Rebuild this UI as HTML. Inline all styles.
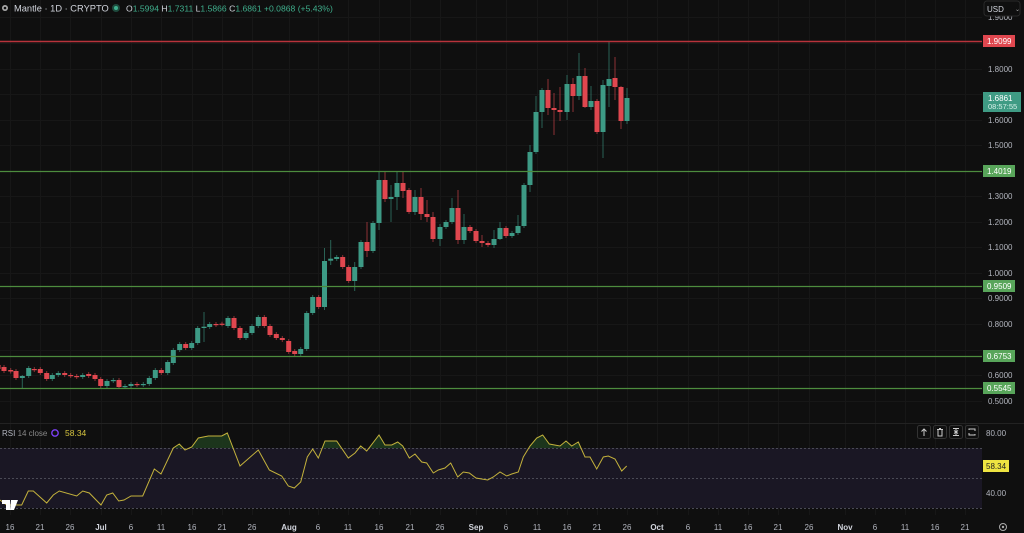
<!DOCTYPE html>
<html><head><meta charset="utf-8"><style>
html,body{margin:0;padding:0;background:#0f0f0f;width:1024px;height:533px;overflow:hidden;font-family:"Liberation Sans",sans-serif}
svg{position:absolute;left:0;top:0}
text{font-family:"Liberation Sans",sans-serif}
</style></head><body>
<svg id="s" width="1024" height="533" viewBox="0 0 1024 533">
<rect width="1024" height="533" fill="#0f0f0f"/>
<g id="grid" stroke="#171717" stroke-width="1"></g>
<rect x="0" y="448" width="982" height="60" fill="#1a1724"/>
<g stroke="#4a4a55" stroke-dasharray="2,2" stroke-width="1">
<line x1="0" y1="448.5" x2="982" y2="448.5"/><line x1="0" y1="478.5" x2="982" y2="478.5"/><line x1="0" y1="508.5" x2="982" y2="508.5"/>
</g>
<line x1="0" y1="423.5" x2="1024" y2="423.5" stroke="#222" />
<g id="candles"></g>
<line x1="0" y1="41.5" x2="982" y2="41.5" stroke="#b8333b" stroke-width="1.5"/>
<line x1="0" y1="171.5" x2="982" y2="171.5" stroke="#4d8c3e" stroke-width="1.3"/>
<line x1="0" y1="286.5" x2="982" y2="286.5" stroke="#4d8c3e" stroke-width="1.3"/>
<line x1="0" y1="356.5" x2="982" y2="356.5" stroke="#4d8c3e" stroke-width="1.3"/>
<line x1="0" y1="388.5" x2="982" y2="388.5" stroke="#4d8c3e" stroke-width="1.3"/>
<g fill="#b2b5be" font-size="8">
<text x="988" y="20">1.9000</text>
<text x="988" y="72">1.8000</text>
<text x="988" y="123">1.6000</text>
<text x="988" y="148">1.5000</text>
<text x="988" y="199">1.3000</text>
<text x="988" y="225">1.2000</text>
<text x="988" y="250">1.1000</text>
<text x="988" y="276">1.0000</text>
<text x="988" y="301">0.9000</text>
<text x="988" y="327">0.8000</text>
<text x="988" y="378">0.6000</text>
<text x="988" y="404">0.5000</text>
</g>
<rect x="984" y="1" width="36" height="15" rx="3" fill="#0f0f0f" stroke="#2a2a2a"/>
<text x="987" y="12" fill="#d1d4dc" font-size="8">USD</text>
<text x="1015" y="11" fill="#aaa" font-size="6">⌄</text>
<rect x="983" y="35" width="32" height="12" fill="#e0474f"/>
<text x="987" y="44" fill="#fff" font-size="8">1.9099</text>
<rect x="983" y="165" width="32" height="12" fill="#58a55a"/>
<text x="987" y="174" fill="#fff" font-size="8">1.4019</text>
<rect x="983" y="280" width="32" height="12" fill="#58a55a"/>
<text x="987" y="289" fill="#fff" font-size="8">0.9509</text>
<rect x="983" y="350" width="32" height="12" fill="#58a55a"/>
<text x="987" y="359" fill="#fff" font-size="8">0.6753</text>
<rect x="983" y="382" width="32" height="12" fill="#58a55a"/>
<text x="987" y="391" fill="#fff" font-size="8">0.5545</text>
<rect x="983" y="92" width="38" height="20" fill="#3f9b84"/>
<text x="988" y="101" fill="#fff" font-size="8">1.6861</text>
<text x="988" y="109" fill="#d6f0e8" font-size="7.5">08:57:55</text>
<circle cx="5" cy="8" r="3" fill="#aaa"/><circle cx="5" cy="8" r="1.3" fill="#0f0f0f"/>
<text x="14" y="11.5" fill="#d1d4dc" font-size="9.3">Mantle · 1D · CRYPTO</text>
<circle cx="116" cy="8" r="4" fill="#1e4a3d"/><circle cx="116" cy="8" r="2" fill="#3fb08e"/>
<text x="126" y="11.5" font-size="8.6" fill="#3fae8c"><tspan fill="#d1d4dc">O</tspan>1.5994 <tspan fill="#d1d4dc">H</tspan>1.7311 <tspan fill="#d1d4dc">L</tspan>1.5866 <tspan fill="#d1d4dc">C</tspan>1.6861 +0.0868 (+5.43%)</text>
<text x="2" y="436" fill="#b2b5be" font-size="8">RSI <tspan fill="#888">14 close</tspan></text>
<circle cx="55" cy="433" r="3.2" fill="none" stroke="#7b3ff2" stroke-width="1.4"/>
<text x="65" y="436" fill="#d7c53f" font-size="8.5">58.34</text>
<path id="ob" fill="#1e3a1e" opacity="0.9"/>
<polyline id="rsi" fill="none" stroke="#c4b23c" stroke-width="1"/>
<g fill="none" stroke="#333" stroke-width="1">
<rect x="917.5" y="425.5" width="13" height="13" rx="2"/><rect x="933.5" y="425.5" width="13" height="13" rx="2"/><rect x="949.5" y="425.5" width="13" height="13" rx="2"/><rect x="965.5" y="425.5" width="13" height="13" rx="2"/>
</g>
<g stroke="#ccc" stroke-width="1" fill="none">
<path d="M924 429v7M921.5 431.5l2.5-2.5 2.5 2.5"/>
<path d="M937 429.5h6M938 430v6h4v-6M939 428.5h2"/>
<path d="M953 428.5h6M953 435.5h6M956 429v6M954 430.5l2 1.5 2-1.5M954 433.5l2-1.5 2 1.5"/>
<path d="M969 430v-1h6v2M975 434v1h-6v-2"/>
</g>
<text x="986" y="436" fill="#b2b5be" font-size="8">80.00</text>
<text x="986" y="496" fill="#b2b5be" font-size="8">40.00</text>
<rect x="983" y="460" width="26" height="12" fill="#eee441"/>
<text x="986" y="469" fill="#222" font-size="8">58.34</text>
<path d="M2 500h8v10h-4v-6h-4z M11 500h7l-4 10h-4z" fill="#fff"/>
<g id="dates" font-size="8" fill="#b2b5be" text-anchor="middle"></g>
<circle cx="1003" cy="527" r="3.5" fill="none" stroke="#aaa" stroke-width="1"/><circle cx="1003" cy="527" r="1.2" fill="#aaa"/>
</svg>
<script>
var NS="http://www.w3.org/2000/svg";
function el(t,a,p){var e=document.createElementNS(NS,t);for(var k in a)e.setAttribute(k,a[k]);p.appendChild(e);return e;}
var grid=document.getElementById('grid');
var dx=[10,40,70,101,131,161,192,222,252,289,318,348,379,410,440,476,506,537,567,597,627,657,688,718,748,778,809,845,875,905,935,965];
var dl=["16","21","26","Jul","6","11","16","21","26","Aug","6","11","16","21","26","Sep","6","11","16","21","26","Oct","6","11","16","21","26","Nov","6","11","16","21"];
dx.forEach(function(x){el('line',{x1:x+.5,y1:0,x2:x+.5,y2:515},grid);});
[17,43,69,94,120,145,171,196,222,247,273,298,324,350,375,401].forEach(function(y){el('line',{x1:0,y1:y+.5,x2:982,y2:y+.5},grid);});
var dg=document.getElementById('dates');
dx.forEach(function(x,i){var t=el('text',{x:x,y:530},dg);t.textContent=dl[i];if(isNaN(+dl[i])){t.setAttribute('fill','#d1d4dc');t.setAttribute('font-weight','bold');}});
var G="#3d9a85",R="#e0474f";
var c=[[-2,365,369,'r'],[4,367,371,'r'],[10.7,370,371.5,'r'],[16,371,378,'r'],[22.3,376,378,'g',375,388],[28.7,368,376,'g'],[34.3,369,370,'r'],[40.3,369,373,'r'],[46.7,373,379,'r'],[52.3,375,379,'g'],[58.3,373,375,'g'],[64.7,373,375,'r'],[70.7,375,376,'r'],[76.7,376,377,'r'],[82.7,375,377,'g'],[88.7,374,376,'r'],[95,375,379,'r'],[100.7,379,386,'r'],[107,381,386,'g'],[113.3,380,381,'g'],[119,380,387,'r'],[125,386,387,'g'],[131,384,386,'g'],[137,384,385,'r'],[143.3,384,385,'g'],[149.3,378,384,'g'],[155.3,370,378,'g'],[161.3,370,373,'r'],[167.7,362,373,'g'],[173.3,350,363,'g'],[179.7,344,350,'g'],[185.7,344,348,'r'],[191.7,343,348,'g'],[197.7,328,343,'g'],[204,326.7,328,'g',312,342],[209.7,324,327,'g'],[216,324,325,'r'],[222,323.7,324.3,'r'],[228,318,326,'g'],[234,318,328,'r'],[240,328,338,'r'],[246,333,338,'g'],[252,326,333,'g'],[258.3,317,326,'g'],[264.3,317,326,'r'],[270,326,335,'r'],[276.3,334,338,'r'],[282.3,338,340,'r'],[288.7,341,352,'r'],[294.7,351,354,'r'],[300.7,349,354,'g'],[306.7,313,349,'g'],
[312.7,297,313,'g'],[318.7,297,307,'r'],[324.5,261,307,'g',248,310],[330.7,258.7,260.7,'g',240,265],[336.7,257,259,'g'],[342.7,257,267,'r'],[348.7,267,281,'r'],[354.7,267,281,'g',262,291],[361,242,267,'g'],[367,242,251,'r',222,257],[373,223,251,'g'],[379,180,223,'g',172,230],[385,180,199,'r',172,202],[391,197,199,'g',185,222],[397,183,197,'g',172,210],[403,183,191,'r',172,198],[409,190,212,'r'],[415,197,212,'g',190,215],[421,197,214,'r',188,220],[427,214,217,'r',200,222],[433,217,239,'r',212,242],[440,227,239,'g',224,246],[446,222,227,'g'],[452,208,222,'g',198,224],[458,208,240,'r',190,244],[464,227,240,'g',214,244],[470,227,231,'r'],[476,231,241,'r'],[482,241,243,'r',235,247],[488,243,245,'r'],[494,239,245,'g',230,248],[500,228,239,'g',222,240],[506,228,236,'r'],[512,233,236,'g'],[518,226,233,'g',215,235],[524,185,226,'g'],[530,152,185,'g',145,192],[536,112,152,'g',96,154],[542,90,112,'g',88,128],[548,90,108,'r',79,115],[554,108,110,'r',93,135],[560,110,112,'r',87,121],[567,84,112,'g',75,120],[573,84,96,'r',78,112],[579,76,96,'g',53,100],[585,76,107,'r',68,108],[591,101,107,'g',86,110],[597,101,132,'r'],[603,85,132,'g',80,158],[609,79,86,'g',42,107],[615,78,87,'r',57,100],[621,87,121,'r',86,129],[627,98,121,'g',88,124]];
var cg=document.getElementById('candles');
c.forEach(function(d){var col=d[3]=='g'?G:R;var x=d[0];var hi=d[4]!==undefined?d[4]:d[1]-2,lo=d[5]!==undefined?d[5]:d[2]+2;
el('line',{x1:x,y1:hi,x2:x,y2:lo,stroke:col,'stroke-width':1,opacity:0.6},cg);
el('rect',{x:x-2.5,y:d[1],width:5,height:Math.max(1.2,d[2]-d[1]),fill:col},cg);});
var r=[[0,500],[6.7,505],[21.7,505],[28.3,491],[33.3,491],[46.7,503],[53.3,495],[59.3,491],[76.7,496],[82.7,491],[89.3,493],[101,505],[106.7,495],[112.7,493],[118.7,501],[124,500],[131,496],[142.7,496],[154.3,469],[161,474],[173.3,448],[179.3,444],[185,450],[191.7,447],[198.3,438],[208.3,436],[221.7,436],[227.3,433],[240,466],[258.3,450],[269.3,470],[281.7,476],[288.3,486],[294.3,488],[300.7,482],[307.3,457],[312.7,449],[318.3,458],[325,441],[330,441],[336.7,441],[348.3,458],[355,453],[360.7,446],[366.7,451],[379,435],[385,445],[391.7,445],[397.7,442],[402.7,446],[409.3,458],[415,454],[421.7,462],[426.7,463],[433.3,473],[438.3,470],[445,468],[450.7,463],[457.7,477],[463.3,472],[469.3,473],[476,478],[481.7,479],[487.7,480],[493.3,477],[500,472],[506.7,476],[511.7,474],[518.3,472],[523.3,457],[530,446],[536.7,438],[542.7,435],[549.3,444],[560,446],[566,441],[571.7,446],[578.3,442],[585,457],[590,457],[596.7,469],[603.3,457],[608.3,456],[615,459],[621.7,471],[626.7,466]];
document.getElementById('rsi').setAttribute('points',r.map(function(p){return p.join(',')}).join(' '));
var d='';var segs=[];var cur=null;
for(var i=0;i<r.length;i++){var p=r[i];if(p[1]<448){if(!cur){cur=[];if(i>0){var q=r[i-1];var t=(448-q[1])/(p[1]-q[1]);cur.push([q[0]+t*(p[0]-q[0]),448]);}else cur.push([p[0],448]);}cur.push(p);}else if(cur){var q=r[i-1];var t=(448-q[1])/(p[1]-q[1]);cur.push([q[0]+t*(p[0]-q[0]),448]);segs.push(cur);cur=null;}}
if(cur)segs.push(cur);
segs.forEach(function(s){d+='M'+s.map(function(p){return p[0].toFixed(1)+','+p[1]}).join('L')+'Z';});
document.getElementById('ob').setAttribute('d',d);
</script>
</body></html>
